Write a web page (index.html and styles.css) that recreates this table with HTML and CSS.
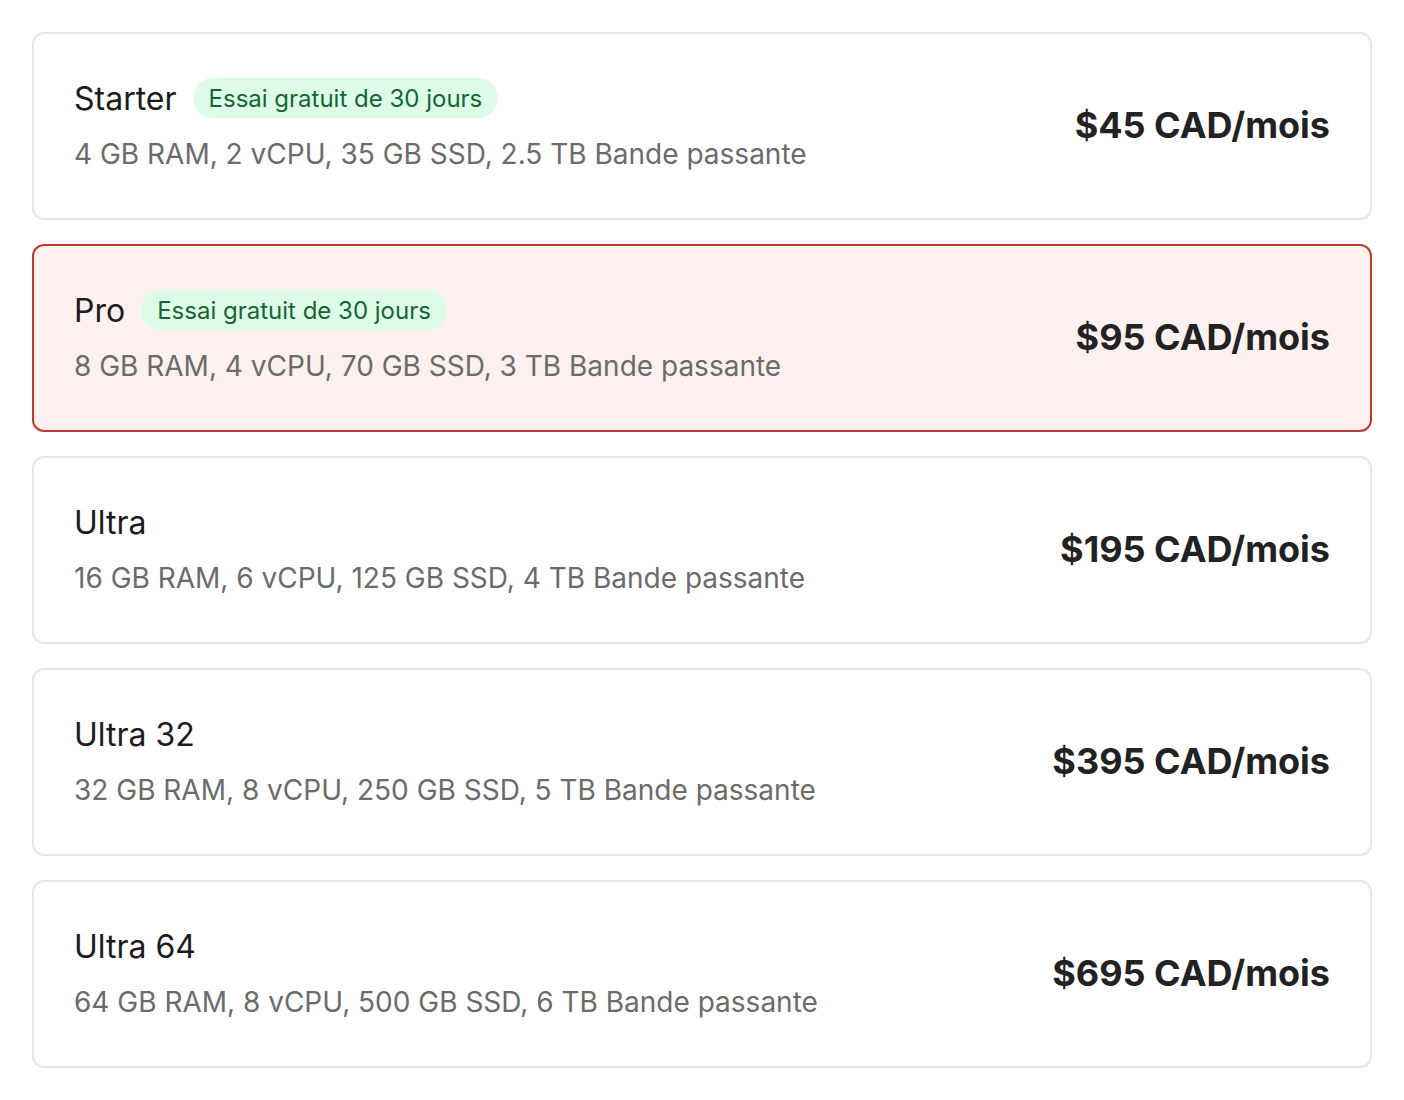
FILE: index.html
```html
<!DOCTYPE html>
<html lang="fr">
<head>
<meta charset="utf-8">
<title>Plans</title>
<link rel="stylesheet" href="styles.css">
</head>
<body>
<div class="plans">
  <div class="plan">
    <div class="info">
      <div class="title-row"><span class="name">Starter</span><span class="badge">Essai gratuit de 30 jours</span></div>
      <div class="spec">4 GB RAM, 2 vCPU, 35 GB SSD, 2.5 TB Bande passante</div>
    </div>
    <div class="price">$45 CAD/mois</div>
  </div>
  <div class="plan selected">
    <div class="info">
      <div class="title-row"><span class="name">Pro</span><span class="badge">Essai gratuit de 30 jours</span></div>
      <div class="spec">8 GB RAM, 4 vCPU, 70 GB SSD, 3 TB Bande passante</div>
    </div>
    <div class="price">$95 CAD/mois</div>
  </div>
  <div class="plan">
    <div class="info">
      <div class="title-row"><span class="name">Ultra</span></div>
      <div class="spec">16 GB RAM, 6 vCPU, 125 GB SSD, 4 TB Bande passante</div>
    </div>
    <div class="price">$195 CAD/mois</div>
  </div>
  <div class="plan">
    <div class="info">
      <div class="title-row"><span class="name">Ultra 32</span></div>
      <div class="spec">32 GB RAM, 8 vCPU, 250 GB SSD, 5 TB Bande passante</div>
    </div>
    <div class="price">$395 CAD/mois</div>
  </div>
  <div class="plan">
    <div class="info">
      <div class="title-row"><span class="name">Ultra 64</span></div>
      <div class="spec">64 GB RAM, 8 vCPU, 500 GB SSD, 6 TB Bande passante</div>
    </div>
    <div class="price">$695 CAD/mois</div>
  </div>
</div>
</body>
</html>
```
FILE: styles.css
```css
html, body {
  margin: 0;
  padding: 0;
  background: #ffffff;
}
body {
  font-family: Inter, "Noto Sans", sans-serif;
  padding: 32px;
}
.plans {
  display: flex;
  flex-direction: column;
  gap: 24px;
}
.plan {
  display: flex;
  align-items: center;
  justify-content: space-between;
  border: 2px solid #e6e6e6;
  border-radius: 12px;
  padding: 44px 40px 46px 40px;
  background: #ffffff;
}
.plan.selected {
  background: #fdf1ef;
  border-color: #c0392f;
}
.info {
  display: flex;
  flex-direction: column;
}
.title-row {
  display: flex;
  align-items: center;
  gap: 16px;
  height: 40px;
}
.name {
  font-size: 32px;
  color: #1c1c1c;
  font-weight: 400;
}
.badge {
  display: inline-flex;
  align-items: center;
  height: 40px;
  padding: 0 16px;
  border-radius: 20px;
  background: #dcfce7;
  color: #166534;
  font-size: 24px;
}
.spec {
  margin-top: 18px;
  font-size: 28px;
  line-height: 36px;
  color: #6b6b6b;
}
.price {
  font-size: 36px;
  font-weight: 700;
  color: #222222;
}
```
